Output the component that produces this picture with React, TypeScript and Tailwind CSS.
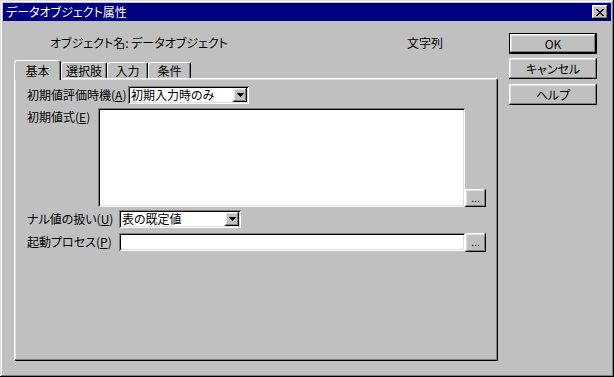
import React from "react";

const raised =
  "shadow-[inset_-1px_-1px_#000,inset_1px_1px_#fff,inset_-2px_-2px_#808080,inset_2px_2px_#dfdfdf]";
const sunken =
  "shadow-[inset_1px_1px_#808080,inset_-1px_-1px_#fff,inset_2px_2px_#000,inset_-2px_-2px_#dfdfdf]";

function Arrow() {
  return (
    <svg width="7" height="4" viewBox="0 0 7 4" shapeRendering="crispEdges">
      <polygon points="0,0 7,0 3.5,4" fill="#000" />
    </svg>
  );
}

function Combo({ w, text }: { w: string; text: string }) {
  return (
    <div className={`${w} h-[18px] bg-white flex items-center pl-[3px] pr-[2px] ${sunken}`}>
      <span className="flex-1 whitespace-nowrap">{text}</span>
      <div className={`w-[14px] h-[14px] bg-[#c0c0c0] flex items-center justify-center ${raised}`}>
        <Arrow />
      </div>
    </div>
  );
}

function Dots({ h }: { h: string }) {
  return (
    <div
      className={`w-[21px] ${h} bg-[#c0c0c0] flex items-center justify-center text-[10px] leading-[10px] pb-[1px] ${raised}`}
    >
      ...
    </div>
  );
}

function Label({ text, k }: { text: string; k: string }) {
  return (
    <span className="whitespace-nowrap">
      {text}(<span className="underline">{k}</span>)
    </span>
  );
}

export default function App() {
  return (
    <div className="w-[614px] h-[377px] bg-[#c0c0c0] p-[3px] flex flex-col text-black text-[12px] leading-[14px] font-['Noto_Sans_CJK_JP',sans-serif] [font-feature-settings:'palt'] shadow-[inset_-1px_-1px_#000,inset_1px_1px_#dfdfdf,inset_-2px_-2px_#808080,inset_2px_2px_#fff]">
      <div className="h-[18px] bg-[#000080] flex items-center justify-between pl-[3px] pr-[3px]">
        <span className="text-white whitespace-nowrap">データオブジェクト属性</span>
        <div className={`w-[16px] h-[14px] bg-[#c0c0c0] flex items-center justify-center ${raised}`}>
          <svg width="8" height="7" viewBox="0 0 8 7" shapeRendering="crispEdges">
            <path
              d="M0 0h2v1h1v1h2v-1h1v-1h2v1h-1v1h-1v1h-1v1h1v1h1v1h1v1h-2v-1h-1v-1h-2v1h-1v1h-2v-1h1v-1h1v-1h1v-1h-1v-1h-1v-1h-1z"
              fill="#000"
            />
          </svg>
        </div>
      </div>
      <div className="flex flex-1">
        <div className="ml-[11px] w-[484px] flex flex-col">
          <div className="h-[39px] pt-[15px] flex">
            <span className="w-[393px] pl-[36px] whitespace-nowrap">オブジェクト名: データオブジェクト</span>
            <span className="whitespace-nowrap">文字列</span>
          </div>
          <div className="h-[18px] flex items-end relative z-10">
            <div className="w-[47px] h-[20px] -mb-[2px] bg-[#c0c0c0] border-l border-t border-r border-l-white border-t-white border-r-black rounded-t-[3px] shadow-[inset_-1px_0_#808080] flex items-center justify-center">
              基本
            </div>
            <div className="w-[46px] h-[16px] bg-[#c0c0c0] border-l border-t border-r border-l-white border-t-white border-r-black rounded-t-[3px] shadow-[inset_-1px_0_#808080] flex items-center justify-center">
              選択肢
            </div>
            <div className="w-[41px] h-[16px] bg-[#c0c0c0] border-l border-t border-r border-l-white border-t-white border-r-black rounded-t-[3px] shadow-[inset_-1px_0_#808080] flex items-center justify-center">
              入力
            </div>
            <div className="w-[43px] h-[16px] bg-[#c0c0c0] border-l border-t border-r border-l-white border-t-white border-r-black rounded-t-[3px] shadow-[inset_-1px_0_#808080] flex items-center justify-center">
              条件
            </div>
          </div>
          <div className="h-[283px] pl-[13px] pt-[8px] flex flex-col shadow-[inset_1px_1px_#fff,inset_-1px_-1px_#000,inset_-2px_-2px_#808080,inset_2px_2px_#dfdfdf]">
            <div className="flex items-center h-[18px]">
              <div className="w-[101px]">
                <Label text="初期値評価時機" k="A" />
              </div>
              <Combo w="w-[121px]" text="初期入力時のみ" />
            </div>
            <div className="flex mt-[4px]">
              <div className="w-[71px] mt-[2px]">
                <Label text="初期値式" k="E" />
              </div>
              <div className={`w-[367px] h-[99px] bg-white ${sunken}`} />
              <div className="self-end">
                <Dots h="h-[18px]" />
              </div>
            </div>
            <div className="flex items-center h-[18px] mt-[3px]">
              <div className="w-[92px]">
                <Label text="ナル値の扱い" k="U" />
              </div>
              <Combo w="w-[122px]" text="表の既定値" />
            </div>
            <div className="flex items-start mt-[5px]">
              <div className="w-[92px] h-[18px] flex items-center">
                <Label text="起動プロセス" k="P" />
              </div>
              <div className={`w-[346px] h-[18px] bg-white ${sunken}`} />
              <Dots h="h-[19px]" />
            </div>
          </div>
        </div>
        <div className="ml-[11px] w-[88px] pt-[12px] flex flex-col">
          <div className="h-[21px] border border-black bg-[#c0c0c0] flex items-center justify-center shadow-[inset_-1px_-1px_#000,inset_1px_1px_#fff,inset_-2px_-2px_#808080,inset_2px_2px_#dfdfdf]">
            OK
          </div>
          <div className={`h-[21px] mt-[4px] bg-[#c0c0c0] flex items-center justify-center ${raised}`}>
            キャンセル
          </div>
          <div className={`h-[21px] mt-[5px] bg-[#c0c0c0] flex items-center justify-center ${raised}`}>
            ヘルプ
          </div>
        </div>
      </div>
    </div>
  );
}
